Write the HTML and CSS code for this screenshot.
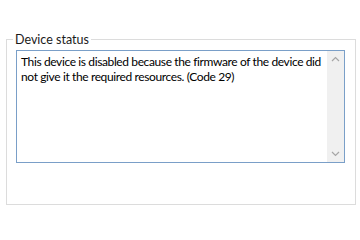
FILE: index.html
```html
<!DOCTYPE html>
<html lang="en">

<head>
    <meta charset="utf-8">
    <title>Device status</title>
    <link rel="stylesheet" href="styles.css">
</head>

<body>
    <fieldset class="group">
        <legend>Device status</legend>
        <div class="status-box">
            <div class="status-text">This device is disabled because the firmware of the device did<br>not give it the required resources. (Code 29)</div>
            <div class="scrollbar">
                <svg width="17" height="17" viewBox="0 0 17 17">
                    <path d="M5 10 L8.5 6.5 L12 10" fill="none" stroke="#a6a6a6" stroke-width="1.2"/>
                </svg>
                <svg width="17" height="17" viewBox="0 0 17 17">
                    <path d="M5 7 L8.5 10.5 L12 7" fill="none" stroke="#a6a6a6" stroke-width="1.2"/>
                </svg>
            </div>
        </div>
    </fieldset>
</body>

</html>
```

FILE: styles.css
```css
body {
    margin: 0;
    padding: 32px 0 0 6px;
    background-color: #ffffff;
    font-family: 'Lato', 'Noto Sans', sans-serif;
    font-size: 12px;
    color: #000000;
}

.group {
    box-sizing: border-box;
    width: 350px;
    min-width: 0;
    height: 173px;
    margin: 0;
    padding: 0 10px 0 9px;
    border: 1px solid #dcdcdc;
}

.group legend {
    margin-left: -3px;
    padding: 0 2px;
    line-height: 15px;
    font-size: 12.5px;
    color: #1a1a1a;
}

.status-box {
    display: flex;
    height: 113px;
    margin-top: 3px;
    box-sizing: border-box;
    border: 1px solid #7a9fc8;
}

.status-text {
    flex: 1;
    min-width: 0;
    padding: 3px 2px 3px 4px;
    line-height: 15px;
    letter-spacing: -0.38px;
    white-space: nowrap;
    overflow: hidden;
}

.scrollbar {
    width: 17px;
    background-color: #f0f0f0;
    display: flex;
    flex-direction: column;
    justify-content: space-between;
}

.scrollbar svg {
    display: block;
}
```
